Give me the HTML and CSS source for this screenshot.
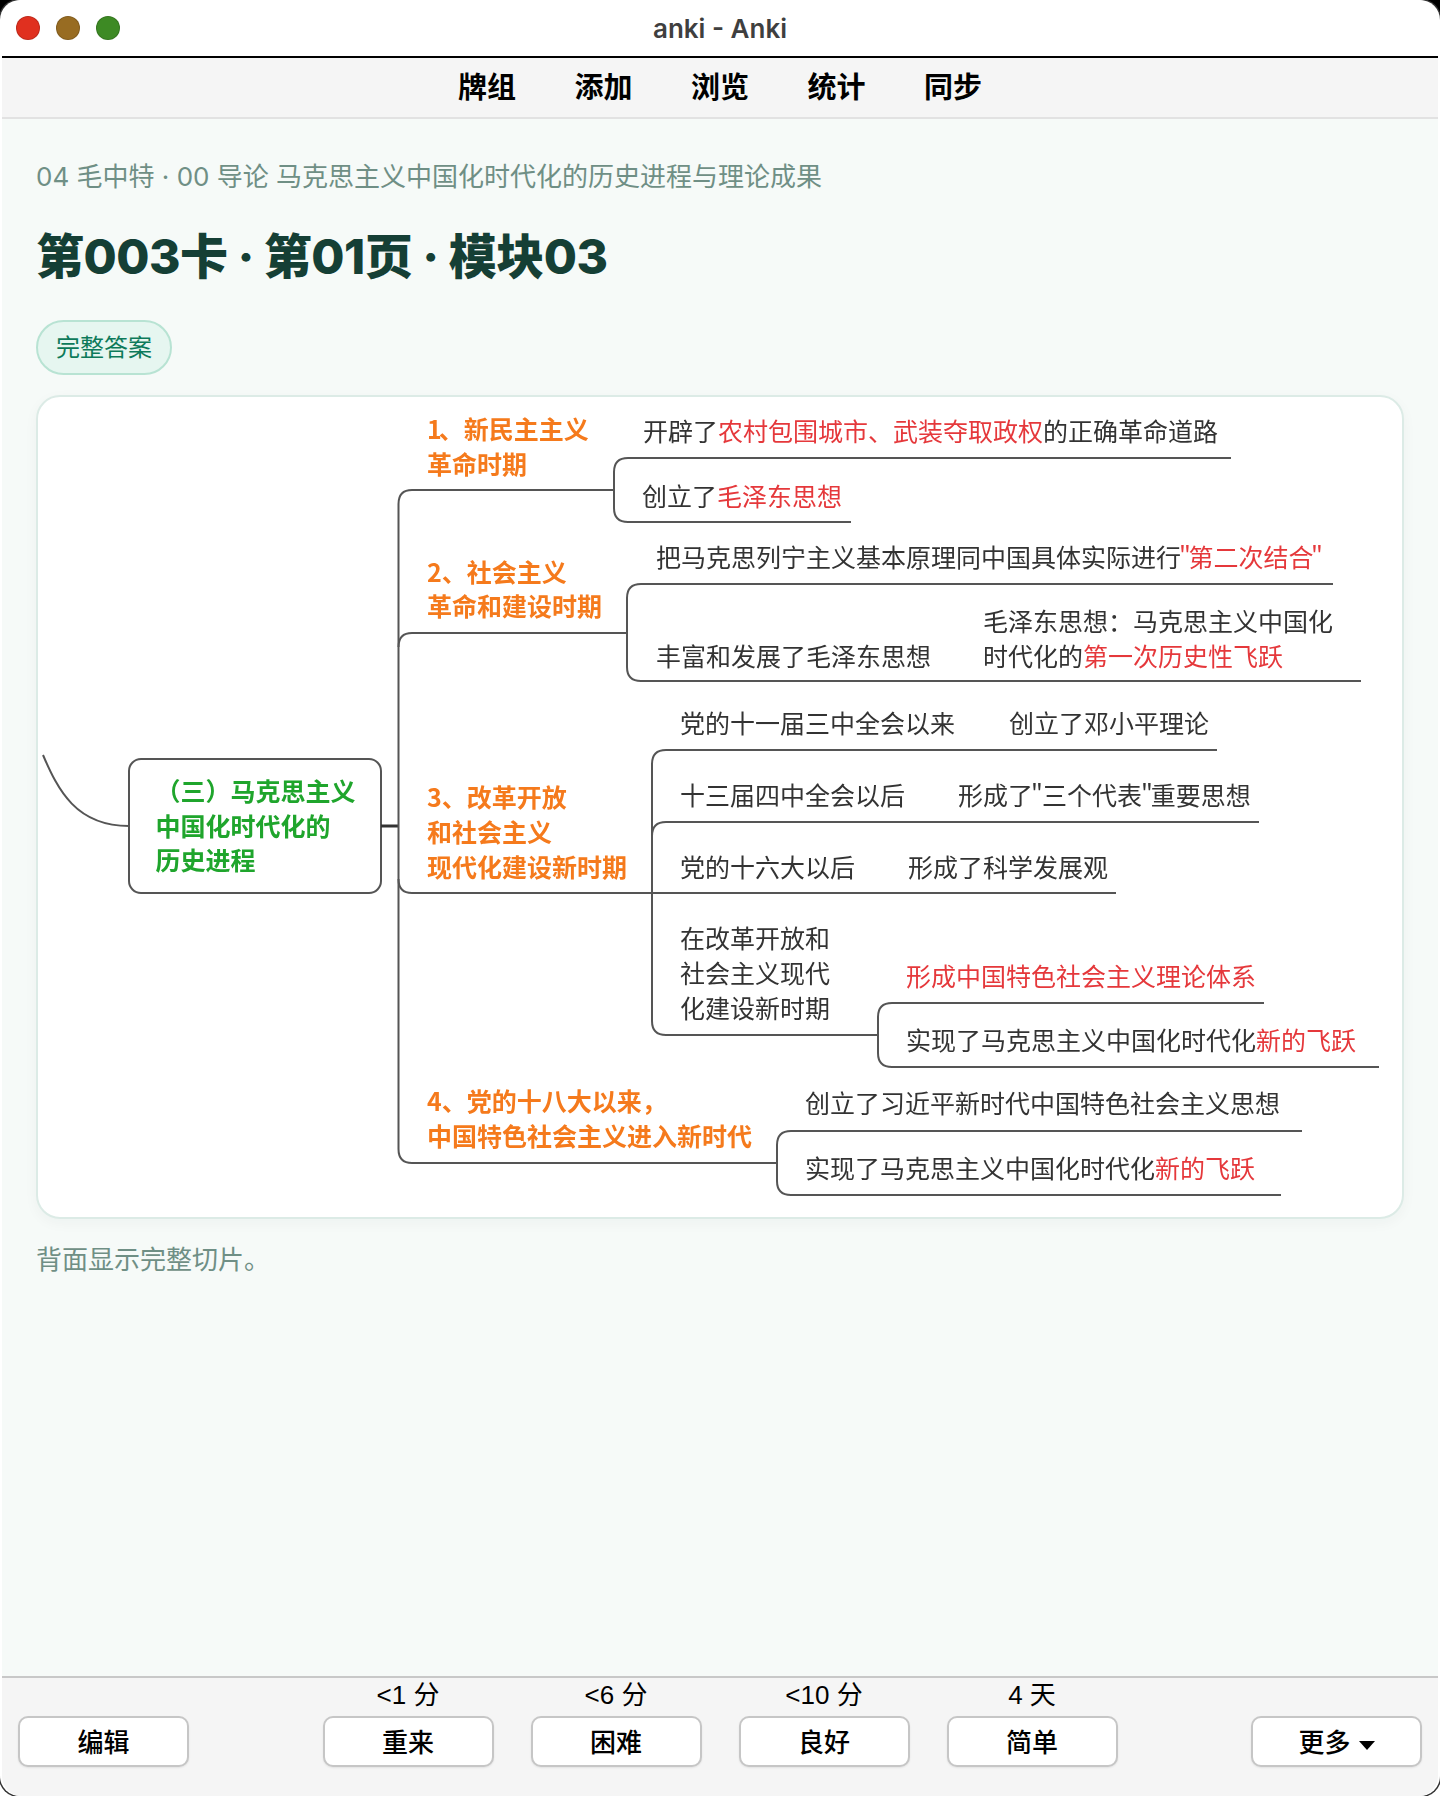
FILE: index.html
```html
<!DOCTYPE html>
<html lang="zh-CN">
<head>
<meta charset="utf-8">
<title>anki - Anki</title>
<link rel="stylesheet" href="styles.css">
</head>
<body>
<div class="window">
  <header class="titlebar">
    <div class="lights"><span class="light red"></span><span class="light amber"></span><span class="light green"></span></div>
    <div class="title">anki - Anki</div>
  </header>
  <nav class="menu"><a>牌组</a><a>添加</a><a>浏览</a><a>统计</a><a>同步</a></nav>
  <main class="content">
    <div class="crumb">04 毛中特 · 00 导论 马克思主义中国化时代化的历史进程与理论成果</div>
    <h1 class="heading">第003卡 · 第01页 · 模块03</h1>
    <div class="badge">完整答案</div>
    <section class="card">
      <svg class="map" viewBox="38 397 1364 820" xmlns="http://www.w3.org/2000/svg">
        <g class="lines">
          <path d="M43 755 C58 790 76 826 129 826"/>
          <rect x="129" y="759" width="252" height="134" rx="12"/>
          <path class="heavy" d="M381 826H398"/>
          <path d="M1231 458H628Q614 458 614 472V508Q614 522 628 522H851"/>
          <path d="M614 490H412Q398.500 490 398.500 504V1149Q398.500 1163 412 1163H777"/>
          <path d="M398.500 647Q398.500 633 412 633H627"/>
          <path d="M398.500 879Q398.500 893 412 893H1116"/>
          <path d="M1333 584H641Q627 584 627 598V667Q627 681 641 681H1361"/>
          <path d="M1217 750H666Q652 750 652 764V1021Q652 1035 666 1035H878"/>
          <path d="M652 836Q652 822 666 822H1259"/>
          <path d="M1264 1003H892Q878 1003 878 1017V1053Q878 1067 892 1067H1379"/>
          <path d="M1302 1131H791Q777 1131 777 1145V1181Q777 1195 791 1195H1281"/>
        </g>
        <g class="node-root">
          <text x="155.500" y="801">（三）马克思主义</text>
          <text x="155.500" y="836">中国化时代化的</text>
          <text x="155.500" y="870">历史进程</text>
        </g>
        <g class="node-head">
          <text x="427" y="439">1<tspan dx="-3">、新民主主义</tspan></text>
          <text x="427" y="474">革命时期</text>
          <text x="427" y="582">2、社会主义</text>
          <text x="427" y="616">革命和建设时期</text>
          <text x="427" y="807">3、改革开放</text>
          <text x="427" y="842">和社会主义</text>
          <text x="427" y="877">现代化建设新时期</text>
          <text x="427" y="1111">4、党的十八大以来，</text>
          <text x="427" y="1146">中国特色社会主义进入新时代</text>
        </g>
        <g class="node-leaf">
          <text x="643" y="441">开辟了<tspan class="hot">农村包围城市、武装夺取政权</tspan>的正确革命道路</text>
          <text x="642" y="506">创立了<tspan class="hot">毛泽东思想</tspan></text>
          <text x="656" y="567">把马克思列宁主义基本原理同中国具体实际进行<tspan class="hot" dx="-2">"</tspan><tspan class="hot" dx="-2.500">第二次结合</tspan><tspan class="hot" dx="-2.500">"</tspan></text>
          <text x="656" y="666">丰富和发展了毛泽东思想</text>
          <text x="983" y="631">毛泽东思想：马克思主义中国化</text>
          <text x="983" y="666">时代化的<tspan class="hot">第一次历史性飞跃</tspan></text>
          <text x="680" y="733">党的十一届三中全会以来</text>
          <text x="1009" y="733">创立了邓小平理论</text>
          <text x="680" y="805">十三届四中全会以后</text>
          <text x="958" y="805">形成了<tspan dx="-2">"</tspan><tspan dx="-1">三个代表</tspan><tspan dx="-1">"</tspan><tspan dx="-2">重要思想</tspan></text>
          <text x="680" y="877">党的十六大以后</text>
          <text x="908" y="877">形成了科学发展观</text>
          <text x="680" y="948">在改革开放和</text>
          <text x="680" y="983">社会主义现代</text>
          <text x="680" y="1018">化建设新时期</text>
          <text x="906" y="986" class="hot">形成中国特色社会主义理论体系</text>
          <text x="906" y="1050">实现了马克思主义中国化时代化<tspan class="hot">新的飞跃</tspan></text>
          <text x="805" y="1113">创立了习近平新时代中国特色社会主义思想</text>
          <text x="805" y="1178">实现了马克思主义中国化时代化<tspan class="hot">新的飞跃</tspan></text>
        </g>
      </svg>
    </section>
    <p class="note">背面显示完整切片。</p>
  </main>
  <footer class="bar">
    <button class="btn">编辑</button>
    <div class="answers">
      <div class="answer"><span class="due">&lt;1 分</span><button class="btn">重来</button></div>
      <div class="answer"><span class="due">&lt;6 分</span><button class="btn">困难</button></div>
      <div class="answer"><span class="due">&lt;10 分</span><button class="btn">良好</button></div>
      <div class="answer"><span class="due">4 天</span><button class="btn">简单</button></div>
    </div>
    <button class="btn">更多<span class="caret"></span></button>
  </footer>
</div>
</body>
</html>
```
FILE: styles.css
```css
* { box-sizing: border-box; }
html, body { margin: 0; padding: 0; }
body {
  width: 1440px;
  height: 1796px;
  background: linear-gradient(#000 50%, #fff 50%);
  font-family: "Inter", "Noto Sans CJK SC", sans-serif;
  overflow: hidden;
}
.window {
  width: 1440px;
  height: 1796px;
  display: flex;
  flex-direction: column;
  padding: 0 2px;
  background: #fff;
  border-radius: 20px;
  box-shadow: 0 0 0 1.500px #333;
}
.titlebar {
  height: 56px;
  flex: none;
  display: flex;
  align-items: center;
  justify-content: center;
  position: relative;
  background: #fff;
  border-radius: 20px 20px 0 0;
}
.lights {
  position: absolute;
  left: 14px;
  top: 16px;
  display: flex;
  gap: 16px;
}
.light { width: 24px; height: 24px; border-radius: 50%; border: 1px solid rgba(0,0,0,.15); }
.red { background: #e0301f; }
.amber { background: #986c22; }
.green { background: #3d8a24; }
.title {
  font-family: "Inter", sans-serif;
  font-size: 26px;
  font-weight: 600;
  color: #3f3f3f;
}
.menu {
  height: 63px;
  flex: none;
  display: flex;
  justify-content: center;
  align-items: center;
  gap: 58.500px;
  padding-bottom: 5px;
  border-top: 2px solid #000;
  border-bottom: 2px solid #e2e2e2;
  background: #f5f5f5;
  font-family: "Noto Sans CJK SC", sans-serif;
  font-size: 29px;
  font-weight: 700;
  color: #000;
}
.content {
  flex: 1;
  min-height: 0;
  padding: 0 34px;
  background: #f6faf8;
}
.crumb {
  margin-top: 38px;
  font-size: 26px;
  line-height: 40px;
  color: #6f8f85;
}
.heading {
  margin: 30px 0 0;
  font-size: 48px;
  line-height: 60px;
  letter-spacing: -0.5px;
  font-weight: 800;
  color: #153f35;
}
.badge {
  display: inline-block;
  margin-top: 33px;
  height: 55px;
  padding: 0 18px;
  border: 2px solid #b8e3d3;
  border-radius: 28px;
  background: #e6f6f0;
  font-size: 24px;
  line-height: 51px;
  color: #0d7a5a;
  vertical-align: top;
}
.card {
  margin-top: 20px;
  width: 1368px;
  height: 824px;
  border: 2px solid #dcebe6;
  border-radius: 24px;
  background: #fff;
  box-shadow: 0 4px 14px rgba(20,60,50,.04);
  overflow: hidden;
}
.map { display: block; width: 1364px; height: 820px; filter: blur(.35px); }
.lines path, .lines rect { fill: none; stroke: #555; stroke-width: 2; }
.lines .heavy { stroke: #333; stroke-width: 3; }
.map text { font-family: "Noto Sans CJK SC", sans-serif; font-size: 25px; }
.node-root text { fill: #1fa52c; font-weight: 700; }
.node-head text { fill: #f57a1c; font-weight: 700; }
.node-leaf text { fill: #333; }
.node-leaf .hot { fill: #e5383b; }
.note {
  margin: 21px 0 0;
  font-size: 26px;
  line-height: 40px;
  color: #6f8f85;
}
.bar {
  height: 120px;
  flex: none;
  display: flex;
  justify-content: space-between;
  align-items: flex-end;
  padding: 0 16px 29px;
  border-top: 2px solid #c8c8c8;
  background: #f5f5f5;
  border-radius: 0 0 20px 20px;
}
.answers { display: flex; gap: 37px; }
.answer { display: flex; flex-direction: column; align-items: center; }
.due {
  font-family: "Liberation Sans", "Noto Sans CJK SC", sans-serif;
  font-size: 26px;
  line-height: 36px;
  color: #000;
  margin-bottom: 3px;
}
.btn {
  width: 171px;
  height: 51px;
  padding: 0 0 3px;
  border: 2px solid #c6c6c6;
  border-radius: 10px;
  background: #fff;
  box-shadow: 0 1px 2px rgba(0,0,0,.08);
  font-family: "Noto Sans CJK SC", sans-serif;
  font-size: 26px;
  font-weight: 500;
  color: #000;
}
.caret {
  display: inline-block;
  width: 0;
  height: 0;
  margin-left: 8px;
  vertical-align: 2px;
  border-left: 8px solid transparent;
  border-right: 8px solid transparent;
  border-top: 9px solid #000;
}
```
